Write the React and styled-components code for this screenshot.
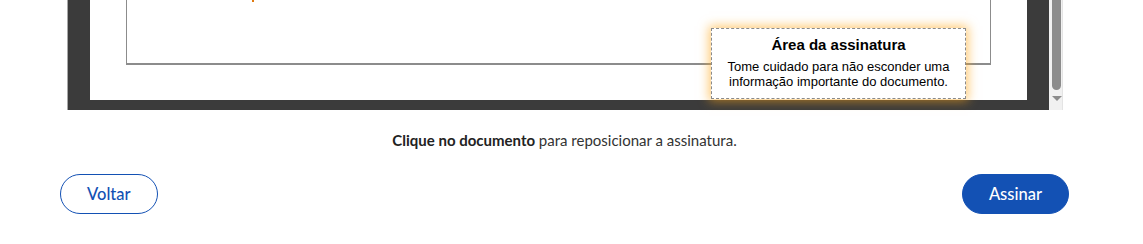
import React from "react";
import styled, { createGlobalStyle } from "styled-components";

const GlobalStyle = createGlobalStyle`
  body {
    margin: 0;
    background: #fff;
    font-family: Lato, "Open Sans", sans-serif;
    color: #333;
  }
`;

const Wrapper = styled.div`
  width: 1009px;
  padding-left: 60px;
  height: 244px;
  overflow: hidden;
`;

const Viewer = styled.div`
  display: flex;
  margin: 0 6px 0 7px;
  height: 110px;
  border-left: 1px solid #a8a8a8;
`;

const ScrollArea = styled.div`
  flex: 1;
  background: #3b3b3b;
  padding: 0 22px 10px 22px;
`;

const Page = styled.div`
  position: relative;
  background: #fff;
  height: 100px;
  padding: 0 36px;
  box-sizing: border-box;
`;

const Frame = styled.div`
  height: 65px;
  border-left: 1px solid #8c8c8c;
  border-right: 1px solid #8c8c8c;
  border-bottom: 2px solid #8c8c8c;
  box-sizing: border-box;
`;

const Mark = styled.span`
  position: absolute;
  left: 162px;
  top: 0;
  width: 2px;
  height: 2px;
  background: #e07a10;
`;

const SignatureBox = styled.div`
  position: absolute;
  left: 621px;
  top: 28px;
  width: 255px;
  height: 71px;
  box-sizing: border-box;
  background: #fff;
  border: 1px dashed #8a8a8a;
  box-shadow: 0 0 10px 2px rgba(255, 165, 20, 0.6);
  font-family: "Liberation Sans", Arial, sans-serif;
  color: #000;
  text-align: center;
  padding-top: 7px;
`;

const BoxTitle = styled.div`
  font-size: 15px;
  font-weight: bold;
  line-height: 17px;
  margin-bottom: 6px;
`;

const BoxText = styled.div`
  font-size: 13px;
  line-height: 15px;
`;

const Scrollbar = styled.div`
  width: 14px;
  background: #f1f1f1;
  border-right: 1px solid #e4e4e4;
  display: flex;
  flex-direction: column;
  align-items: center;
  padding-bottom: 6px;
  box-sizing: border-box;
`;

const Thumb = styled.div`
  width: 9px;
  height: 90px;
  background: #8c8c8c;
  border-radius: 0 0 5px 5px;
  margin-left: 2px;
`;

const Arrow = styled.div`
  margin-top: 6px;
  margin-left: 2px;
  width: 0;
  height: 0;
  border-left: 5px solid transparent;
  border-right: 5px solid transparent;
  border-top: 5px solid #8c8c8c;
`;

const Hint = styled.p`
  margin: 20px 0 0;
  text-align: center;
  font-size: 15px;
  line-height: 20px;
  color: #333;
  b {
    font-weight: 700;
    color: #222;
  }
`;

const Actions = styled.div`
  display: flex;
  justify-content: space-between;
  margin-top: 24px;
`;

const Button = styled.button`
  height: 40px;
  padding: 0 26px;
  border-radius: 20px;
  border: 1px solid #1351b4;
  background: ${(p) => (p.$primary ? "#1351b4" : "#fff")};
  color: ${(p) => (p.$primary ? "#fff" : "#1351b4")};
  font-family: Lato, "Open Sans", sans-serif;
  font-size: 16.5px;
  font-weight: 500;
  cursor: pointer;
`;

export default function App() {
  return (
    <>
      <GlobalStyle />
      <Wrapper>
        <Viewer>
          <ScrollArea>
            <Page>
              <Frame />
              <Mark />
              <SignatureBox>
                <BoxTitle>Área da assinatura</BoxTitle>
                <BoxText>
                  Tome cuidado para não esconder uma
                  <br />
                  informação importante do documento.
                </BoxText>
              </SignatureBox>
            </Page>
          </ScrollArea>
          <Scrollbar>
            <Thumb />
            <Arrow />
          </Scrollbar>
        </Viewer>
        <Hint>
          <b>Clique no documento</b> para reposicionar a assinatura.
        </Hint>
        <Actions>
          <Button>Voltar</Button>
          <Button $primary>Assinar</Button>
        </Actions>
      </Wrapper>
    </>
  );
}
